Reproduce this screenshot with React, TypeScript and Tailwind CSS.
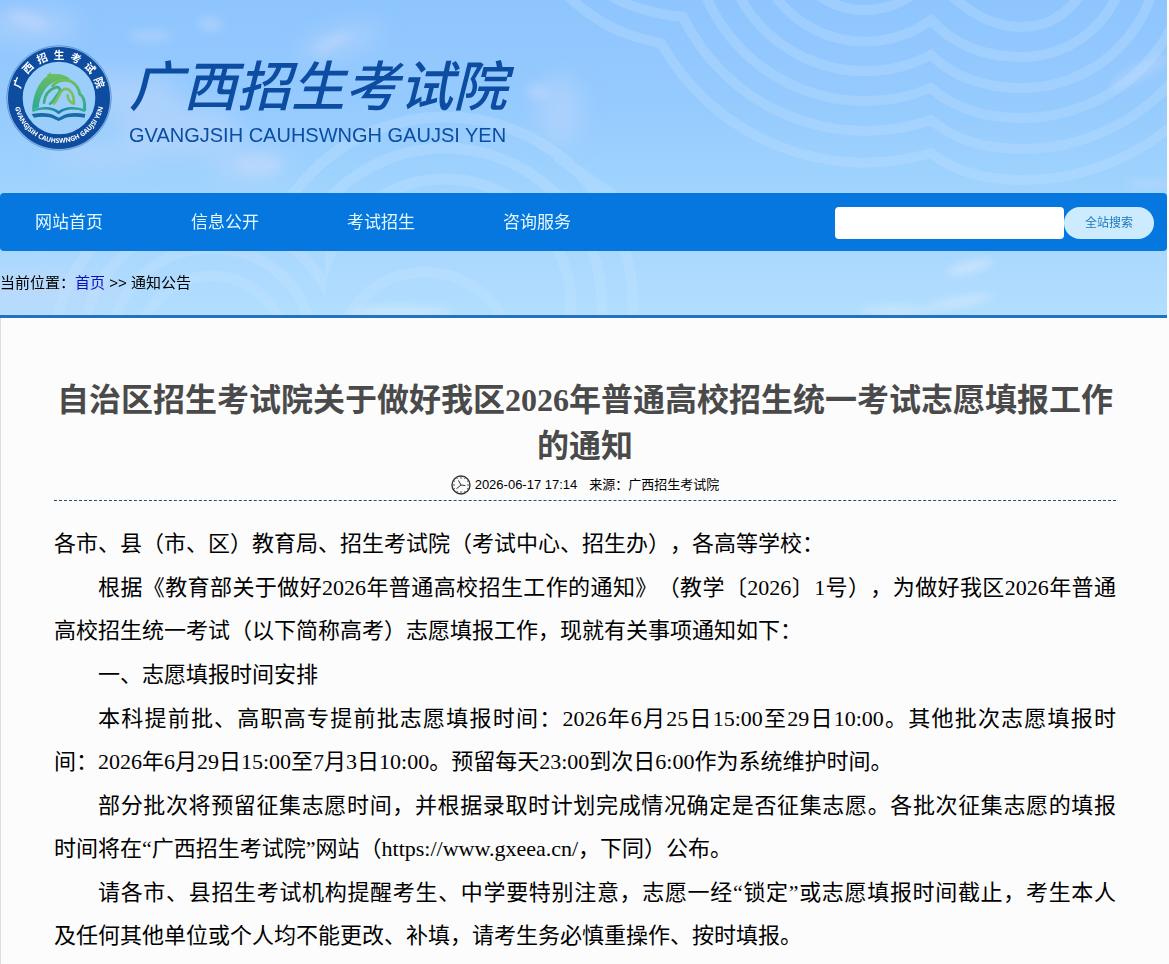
const menus = ['网站首页', '信息公开', '考试招生', '咨询服务'];

// Every line but the last one of a paragraph fills the column
const paragraphs = [
    { indent: false, lines: ['各市、县（市、区）教育局、招生考试院（考试中心、招生办），各高等学校：'] },
    {
        indent: true,
        lines: [
            '根据《教育部关于做好2026年普通高校招生工作的通知》（教学〔2026〕1号），为做好我区2026年普通',
            '高校招生统一考试（以下简称高考）志愿填报工作，现就有关事项通知如下：',
        ],
    },
    { indent: true, lines: ['一、志愿填报时间安排'] },
    {
        indent: true,
        lines: [
            '本科提前批、高职高专提前批志愿填报时间：2026年6月25日15:00至29日10:00。其他批次志愿填报时',
            '间：2026年6月29日15:00至7月3日10:00。预留每天23:00到次日6:00作为系统维护时间。',
        ],
    },
    {
        indent: true,
        lines: [
            '部分批次将预留征集志愿时间，并根据录取时计划完成情况确定是否征集志愿。各批次征集志愿的填报',
            '时间将在“广西招生考试院”网站（https://www.gxeea.cn/，下同）公布。',
        ],
    },
    {
        indent: true,
        lines: [
            '请各市、县招生考试机构提醒考生、中学要特别注意，志愿一经“锁定”或志愿填报时间截止，考生本人',
            '及任何其他单位或个人均不能更改、补填，请考生务必慎重操作、按时填报。',
        ],
    },
];

const Sky = () => (
    <svg
        className="absolute inset-0 h-full w-full"
        viewBox="0 0 1167 318"
        preserveAspectRatio="xMidYMin slice"
        aria-hidden="true"
    >
        <defs>
            <linearGradient id="sky" x1="0" y1="0" x2="0" y2="1">
                <stop offset="0" stopColor="#8ec5fe" />
                <stop offset="0.35" stopColor="#96cbfe" />
                <stop offset="0.6" stopColor="#a0d4fe" />
                <stop offset="0.8" stopColor="#aad8fe" />
                <stop offset="1" stopColor="#b2defe" />
            </linearGradient>
            <filter id="cloud" x="-50%" y="-100%" width="200%" height="300%">
                <feGaussianBlur stdDeviation="12" />
            </filter>
            <filter id="wisp" x="-50%" y="-100%" width="200%" height="300%">
                <feGaussianBlur stdDeviation="5" />
            </filter>
            <clipPath id="waveLeft"><rect x="0" y="240" width="325" height="78" /></clipPath>
            <clipPath id="waveRight"><path d="M250 100H700V318H325V240H250Z" /></clipPath>
        </defs>
        <rect width="1167" height="318" fill="url(#sky)" />
        <g fill="#c3d9fb" filter="url(#cloud)" opacity="0.5">
            <ellipse cx="30" cy="25" rx="50" ry="16" />
            <ellipse cx="120" cy="95" rx="60" ry="22" />
            <ellipse cx="180" cy="130" rx="60" ry="26" />
            <ellipse cx="100" cy="155" rx="55" ry="12" />
            <ellipse cx="250" cy="165" rx="40" ry="16" />
            <ellipse cx="340" cy="42" rx="45" ry="12" transform="rotate(-18 340 42)" />
            <ellipse cx="560" cy="110" rx="22" ry="34" />
            <ellipse cx="40" cy="290" rx="90" ry="20" />
        </g>
        <g fill="#cbdcfb" filter="url(#wisp)" opacity="0.4">
            <ellipse cx="28" cy="20" rx="22" ry="8" transform="rotate(18 28 20)" />
            <ellipse cx="210" cy="24" rx="12" ry="8" />
            <ellipse cx="150" cy="36" rx="22" ry="6" />
            <ellipse cx="332" cy="42" rx="22" ry="6" transform="rotate(-24 332 42)" />
            <ellipse cx="258" cy="165" rx="24" ry="10" />
            <ellipse cx="538" cy="92" rx="12" ry="8" />
            <ellipse cx="1140" cy="72" rx="34" ry="7" transform="rotate(-28 1140 72)" />
            <ellipse cx="1150" cy="184" rx="24" ry="4" />
        </g>
        <g fill="#e2effd" filter="url(#wisp)" opacity="0.6">
            <ellipse cx="400" cy="312" rx="52" ry="5" />
            <ellipse cx="970" cy="267" rx="24" ry="5" transform="rotate(-14 970 267)" />
            <ellipse cx="895" cy="311" rx="36" ry="4" />
            <ellipse cx="960" cy="302" rx="34" ry="4" transform="rotate(-10 960 302)" />
        </g>
        {/* Drum ripples, top right */}
        <g fill="none" stroke="#c2e0ff" strokeWidth="10" opacity="0.3">
            <path d="M568 -4 Q607 34 661 43 A233 233 0 0 0 931 153 Q965 180 1022 180 A235 235 0 0 0 1257 -55" />
            <path d="M607 -6 Q637 12 683 17 A203 203 0 0 0 931 120 Q965 149 1022 149 A202 202 0 0 0 1224 -53" />
            <path d="M692 -70 A173 173 0 0 0 931 88 Q965 118 1022 118 A169 169 0 0 0 1191 -51" />
            <path d="M722 -70 A143 143 0 0 0 931 55 Q965 88 1022 88 A137 137 0 0 0 1159 -49" />
            <path d="M753 -70 A112 112 0 0 0 931 20 Q965 57 1022 57 A104 104 0 0 0 1126 -47" />
            <circle cx="865" cy="-72" r="82" />
            <path d="M950 -6 Q984 27 1022 27 A68 68 0 0 0 1090 -41" />
        </g>
        {/* Ripples behind the menu */}
        <g fill="none" stroke="#c9e4ff" strokeWidth="11" opacity="0.27">
            <g clipPath="url(#waveRight)">
                {[188, 157, 126].map((r) => <circle key={r} cx="445" cy="305" r={r} />)}
                <circle cx="425" cy="360" r="88" />
            </g>
            <g clipPath="url(#waveLeft)">
                {[158, 130, 102, 74].map((r) => <circle key={r} cx="212" cy="350" r={r} />)}
            </g>
            <path d="M556 156 L614 196" />
        </g>
    </svg>
);

const Seal = () => (
    <svg className="h-[106px] w-[106px] shrink-0" viewBox="20 43 318 318" role="img" aria-label="广西招生考试院">
        <defs>
            <path id="sealArc" d="M44 202 A135 135 0 0 0 314 202" />
            <linearGradient id="hill" x1="0" y1="0" x2="0" y2="1">
                <stop offset="0" stopColor="#6fc05a" />
                <stop offset="1" stopColor="#2aa79b" />
            </linearGradient>
            <linearGradient id="book" x1="0" y1="0" x2="1" y2="0">
                <stop offset="0" stopColor="#3bb48c" />
                <stop offset="0.5" stopColor="#1c7fa8" />
                <stop offset="1" stopColor="#35b190" />
            </linearGradient>
        </defs>
        <circle cx="179" cy="202" r="157" fill="#8dbcf0" stroke="#4d87c7" strokeWidth="2" />
        <circle cx="179" cy="202" r="131" fill="#9bcefb" stroke="#0d4c9f" strokeWidth="44" />
        <g
            className="font-['Noto_Sans_CJK_SC',sans-serif] font-bold"
            fill="#ffffff"
            fontSize="32"
            textAnchor="middle"
        >
            {['广', '西', '招', '生', '考', '试', '院'].map((char, index) => (
                <text key={char} x="179" y="84" transform={`rotate(${(index - 3) * 23} 179 202)`}>{char}</text>
            ))}
        </g>
        <text className="font-['Open_Sans',sans-serif] font-bold" fill="#ffffff" fontSize="20" textAnchor="middle">
            <textPath href="#sealArc" startOffset="50%">GVANGJSIH CAUHSWNGH GAUJSI YEN</textPath>
        </text>
        <path
            d="M99 240 C99 190 124 146 145 136 L143 131 L150 130 L152 123 L156 131 C180 128 202 134 213 146 C178 143 150 154 134 182 C122 202 118 220 119 230 C110 231 104 235 99 240Z"
            fill="url(#hill)"
        />
        <path d="M134 216 C136 190 150 178 164 172 C182 164 187 180 176 190 C166 200 164 214 152 219" fill="none" stroke="#3fae7e" strokeWidth="8" strokeLinecap="round" />
        <path d="M160 166 C176 145 210 143 226 160 C236 170 240 181 241 190 C253 196 257 216 256 238" fill="none" stroke="url(#hill)" strokeWidth="9" strokeLinecap="round" />
        <path d="M164 219 C176 207 176 188 190 178 C204 168 218 182 222 198 L224 219 C212 216 204 205 205 194" fill="none" stroke="#79c159" strokeWidth="8" strokeLinecap="round" strokeLinejoin="round" />
        <path d="M99 240 C128 229 160 230 178 246 C196 230 230 229 257 240" fill="none" stroke="url(#book)" strokeWidth="8" strokeLinejoin="round" />
        <path d="M97 250 C125 245 153 246 169 257 L178 261 L187 257 C203 246 230 245 258 250 L256 261 C228 257 205 257 190 266 L178 271 L166 266 C150 257 126 257 104 261Z" fill="#176ba6" />
    </svg>
);

const Clock = () => (
    <svg className="h-5 w-5" viewBox="0 0 20 20" fill="none" stroke="#333333" aria-hidden="true">
        <circle cx="10" cy="10" r="9" strokeWidth="1.4" />
        <path d="M10 2v2M10 16v2M2 10h2M16 10h2M14 3.1l-.6 1M17 6l-1 .6M17 14l-1-.6M14 17l-.6-1M6 17l.6-1M3 14l1-.6M3 6l1 .6M6 3.1l.6 1" strokeWidth="0.8" />
        <path d="M7.4 5.4L10 10l4.4.6M10 10l-4.6 3.8" strokeWidth="1" />
    </svg>
);

const Header = () => {
    return (
        <header className="relative border-b-[3px] border-[#2272c3]">
            <Sky />
            <div className="relative">
                <div className="flex h-[193px] items-start pl-[6px] pt-[45px]">
                    <Seal />
                    <div className="ml-[17px] text-[#0c4da2]">
                        <h2 className="whitespace-nowrap font-['Noto_Sans_CJK_SC',sans-serif] text-[54px] font-medium italic leading-[76px]">广西招生考试院</h2>
                        <p className="whitespace-nowrap text-xl leading-7">GVANGJSIH CAUHSWNGH GAUJSI YEN</p>
                    </div>
                </div>
                {/* Menu */}
                <div className="flex h-[58px] items-center justify-between rounded bg-[#0777e0] pr-[13px] pt-px">
                    <nav className="flex">
                        {menus.map((menu) => (
                            <a key={menu} href="#" className="w-[156px] pl-[35px] text-[17px] leading-6 text-[#e3f8ff]">{menu}</a>
                        ))}
                    </nav>
                    <form className="flex">
                        <input type="text" aria-label="全站搜索" className="h-8 w-[229px] rounded bg-white px-2 text-sm outline-none" />
                        <button type="button" className="h-8 w-[90px] rounded-full bg-[#cdebfe] text-xs text-[#1c78bb]">全站搜索</button>
                    </form>
                </div>
                {/* Breadcrumb */}
                <div className="flex h-16 items-center text-[15px] text-black">
                    <p>当前位置：<a href="#" className="text-[#0d0dc4]">首页</a> &gt;&gt; 通知公告</p>
                </div>
            </div>
        </header>
    );
};

export default function App() {
    return (
        <div className="flex min-h-screen flex-col bg-[#fcfcfc] pr-[2px] font-['Liberation_Sans','Noto_Sans_CJK_SC',sans-serif] [text-spacing-trim:space-all]">
            <Header />
            <main className="grow border-l border-[#dcdfe2] pl-[53px] pr-[51px] pt-[59px]">
                <h1 className="text-center font-['Liberation_Serif','Noto_Sans_CJK_SC',serif] text-[32px] font-bold leading-[46px] text-[#4a4a4a]">
                    自治区招生考试院关于做好我区2026年普通高校招生统一考试志愿填报工作的通知
                </h1>
                <div className="flex h-8 items-center justify-center border-b border-dashed border-[#1f4e70] text-[13px] text-black">
                    <Clock />
                    <span className="ml-1">2026-06-17 17:14</span>
                    <span className="ml-3">来源：广西招生考试院</span>
                </div>
                <article className="flex flex-col gap-px pt-[21px] font-['Liberation_Serif','Noto_Sans_CJK_SC',serif] text-[22px] leading-[43px] text-black">
                    {paragraphs.map((paragraph, index) => (
                        <p key={index}>
                            {paragraph.lines.map((line, i) => (
                                <span
                                    key={i}
                                    className={`block ${paragraph.indent && i === 0 ? 'indent-[2em]' : ''} ${i < paragraph.lines.length - 1 ? '[text-align-last:justify]' : ''}`}
                                >
                                    {line}
                                </span>
                            ))}
                        </p>
                    ))}
                </article>
            </main>
        </div>
    );
}
